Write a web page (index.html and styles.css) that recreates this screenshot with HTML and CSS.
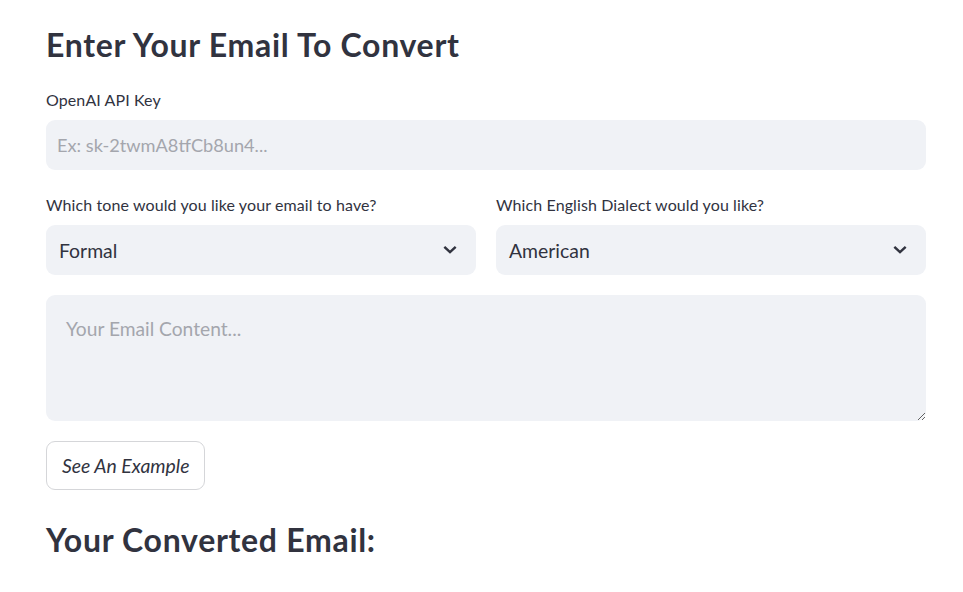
FILE: index.html
```html
<!DOCTYPE html>
<html lang="en">
<head>
<meta charset="utf-8">
<title>Email Converter</title>
<link rel="stylesheet" href="styles.css">
</head>
<body>
<main class="page">
  <h1 class="title">Enter Your Email To Convert</h1>

  <div class="field first">
    <label class="label">OpenAI API Key</label>
    <div class="input"><span class="placeholder">Ex: sk-2twmA8tfCb8un4...</span></div>
  </div>

  <div class="columns">
    <div class="field">
      <label class="label">Which tone would you like your email to have?</label>
      <div class="select">
        <span class="value">Formal</span>
        <svg class="chev" width="16" height="16" viewBox="0 0 16 16"><path d="M3.2 5.6l4.8 4.6 4.8-4.6" fill="none" stroke="#31333f" stroke-width="2.4" stroke-linecap="square" stroke-linejoin="miter"/></svg>
      </div>
    </div>
    <div class="field">
      <label class="label">Which English Dialect would you like?</label>
      <div class="select">
        <span class="value">American</span>
        <svg class="chev" width="16" height="16" viewBox="0 0 16 16"><path d="M3.2 5.6l4.8 4.6 4.8-4.6" fill="none" stroke="#31333f" stroke-width="2.4" stroke-linecap="square" stroke-linejoin="miter"/></svg>
      </div>
    </div>
  </div>

  <textarea class="area" placeholder="Your Email Content..."></textarea>

  <button class="btn" type="button">See An Example</button>

  <h2 class="subtitle">Your Converted Email:</h2>
</main>
</body>
</html>
```
FILE: styles.css
```css
html, body {
  margin: 0;
  padding: 0;
  background: #ffffff;
}
body {
  font-family: "Source Sans Pro", Lato, "Noto Sans", sans-serif;
  color: #31333f;
}
.page {
  width: 880px;
  padding: 0 0 0 46px;
  display: flex;
  flex-direction: column;
}
.title {
  margin: 26px 0 0 0;
  font-size: 32px;
  letter-spacing: 0.7px;
  line-height: 38px;
  font-weight: 700;
}
.field {
  display: flex;
  flex-direction: column;
}
.label {
  font-size: 16px;
  letter-spacing: 0.1px;
  line-height: 20px;
  margin: 0;
  height: 20px;
}
.first .label { margin-top: 26px; }
.input {
  margin-top: 10px;
  height: 50px;
  border-radius: 9px;
  background: #f0f2f6;
  display: flex;
  align-items: center;
  padding-left: 11px;
  box-sizing: border-box;
}
.placeholder {
  font-size: 18.2px;
  color: #a4a6ad;
}
.columns {
  display: grid;
  grid-template-columns: 1fr 1fr;
  gap: 20px;
}
.columns .label { margin-top: 25px; }
.select {
  margin-top: 10px;
  height: 50px;
  border-radius: 9px;
  background: #f0f2f6;
  display: flex;
  align-items: center;
  justify-content: space-between;
  padding: 0 18px 0 13px;
  box-sizing: border-box;
}
.value {
  font-size: 19.4px;
}
.chev {
  display: block;
}
.area {
  margin-top: 20px;
  height: 126px;
  box-sizing: border-box;
  border: none;
  border-radius: 9px;
  background: #f0f2f6;
  padding: 22px 20px;
  font-family: inherit;
  font-size: 19.2px;
  color: #31333f;
  resize: vertical;
  outline: none;
}
.area::placeholder {
  color: #a4a6ad;
}
.btn {
  align-self: flex-start;
  margin-top: 20px;
  height: 49px;
  padding: 0 15px;
  background: #ffffff;
  border: 1px solid #d5d6d9;
  border-radius: 9px;
  font-family: inherit;
  font-style: italic;
  font-size: 19.4px;
  color: #31333f;
}
.subtitle {
  margin: 31px 0 0 0;
  font-size: 32px;
  letter-spacing: 0.7px;
  line-height: 38px;
  font-weight: 700;
}
```
